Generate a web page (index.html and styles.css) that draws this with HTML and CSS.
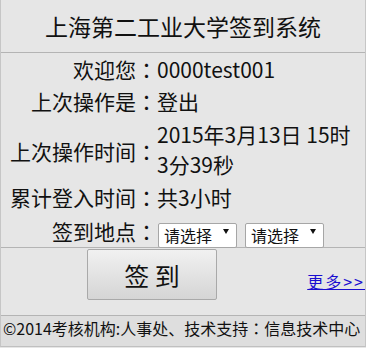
FILE: index.html
```html
<!DOCTYPE html>
<html lang="zh-CN">
<head>
<meta charset="utf-8">
<title>上海第二工业大学签到系统</title>
<link rel="stylesheet" href="styles.css">
</head>
<body>
<div class="page">
  <header class="title">上海第二工业大学签到系统</header>
  <div class="info">
    <div class="row">
      <div class="label">欢迎您<span class="colon" lang="zh-TW">：</span></div>
      <div class="value">0000test001</div>
    </div>
    <div class="row">
      <div class="label">上次操作是<span class="colon" lang="zh-TW">：</span></div>
      <div class="value">登出</div>
    </div>
    <div class="row row-tall">
      <div class="label">上次操作时间<span class="colon" lang="zh-TW">：</span></div>
      <div class="value">2015年3月13日 15时<br>3分39秒</div>
    </div>
    <div class="row row-total">
      <div class="label">累计登入时间<span class="colon" lang="zh-TW">：</span></div>
      <div class="value">共3小时</div>
    </div>
    <div class="row row-place">
      <div class="label">签到地点<span class="colon" lang="zh-TW">：</span></div>
      <div class="value selects">
        <div class="select-wrap">
          <select class="select"><option>请选择</option></select>
        </div>
        <div class="select-wrap">
          <select class="select"><option>请选择</option></select>
        </div>
      </div>
    </div>
  </div>
  <div class="actions">
    <button class="sign-btn" type="button">签 到</button>
    <a class="more" href="#">更多&gt;&gt;</a>
  </div>
  <footer class="footer">©2014考核机构:人事处、技术支持<span class="colon" lang="zh-TW">：</span>信息技术中心</footer>
</div>
</body>
</html>
```

FILE: styles.css
```css
* {
  box-sizing: border-box;
}

html, body {
  margin: 0;
  padding: 0;
  background: #e6e6e6;
}

body {
  font-family: "Noto Sans CJK SC", "Microsoft YaHei", sans-serif;
  color: #111;
}

.page {
  width: 366px;
  height: 347px;
  background: #e6e6e6;
  border-left: 1px solid #c6c6c6;
  border-right: 1px solid #c6c6c6;
  border-bottom: 1px solid #c0c0c0;
  display: flex;
  flex-direction: column;
}

.title {
  height: 53px;
  border-bottom: 1px solid #b4b4b4;
  font-size: 23px;
  line-height: 53px;
  text-align: center;
}

.colon {
  font-family: "Noto Sans CJK TC", "Noto Sans CJK SC", sans-serif;
}

.info {
  display: flex;
  flex-direction: column;
}

.row {
  display: flex;
  align-items: center;
  font-size: 21px;
  line-height: 29px;
  padding: 2px 0 1px;
}

.label {
  width: 156px;
  flex: none;
  text-align: right;
  white-space: nowrap;
}

.value {
  flex: 1;
  white-space: nowrap;
}

.row-tall .value {
  line-height: 30px;
}

.row-tall .label {
  padding-top: 4px;
}

.row-total {
  padding-top: 3px;
}

.row-place {
  height: 35px;
  padding: 0;
  align-items: flex-start;
  border-bottom: 1px solid #b4b4b4;
}

.row-place .label {
  padding-top: 4px;
}

.selects {
  display: flex;
  gap: 8px;
  padding-left: 1px;
  padding-top: 6px;
}

.select-wrap {
  position: relative;
  width: 79px;
  height: 25px;
}

.select-wrap::after {
  content: "";
  position: absolute;
  right: 8px;
  top: 10px;
  border-left: 3px solid transparent;
  border-right: 3px solid transparent;
  border-top: 5px solid #111;
  pointer-events: none;
}

.select {
  appearance: none;
  -webkit-appearance: none;
  width: 100%;
  height: 100%;
  margin: 0;
  padding: 0 0 0 5px;
  font-family: inherit;
  font-size: 16px;
  line-height: 23px;
  color: #111;
  background: #fff;
  border: 1px solid #a6a6a6;
  border-radius: 2px;
}

.actions {
  display: flex;
  align-items: flex-start;
  height: 67px;
  padding: 1px 0 0 86px;
}

.sign-btn {
  width: 130px;
  height: 51px;
  font-family: inherit;
  font-size: 25px;
  color: #111;
  background: linear-gradient(#f1f1f1, #d5d5d5);
  border: 1px solid #a9a9a9;
  border-radius: 2px;
  padding: 0;
}

.more {
  margin-left: auto;
  margin-top: 23px;
  font-size: 16px;
  line-height: 18px;
  letter-spacing: 2px;
  color: #1a0dd0;
  text-decoration: underline;
}

.footer {
  flex: 1;
  border-top: 1px solid #b4b4b4;
  background: #dedede;
  font-size: 16px;
  line-height: 22px;
  padding: 1px 0 0 2px;
  white-space: nowrap;
}
```
